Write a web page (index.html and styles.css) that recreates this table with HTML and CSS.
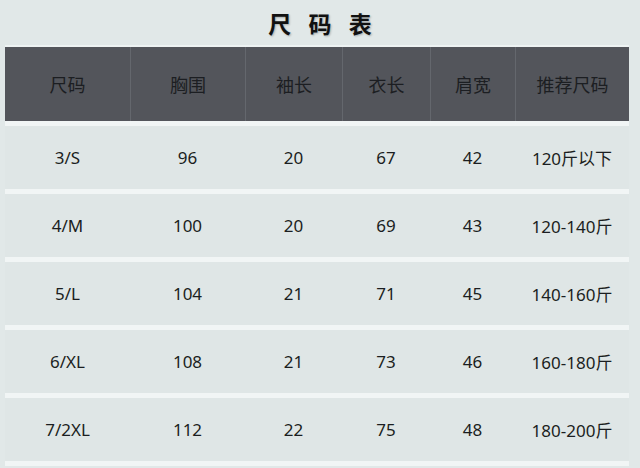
FILE: index.html
```html
<!DOCTYPE html>
<html lang="zh">
<head>
<meta charset="utf-8">
<link rel="stylesheet" href="styles.css">
</head>
<body>
<div class="page">
  <h1 class="title">尺 码 表</h1>
  <div class="table">
    <div class="row head">
      <div class="cell">尺码</div><div class="cell">胸围</div><div class="cell">袖长</div><div class="cell">衣长</div><div class="cell">肩宽</div><div class="cell">推荐尺码</div>
    </div>
    <div class="row">
      <div class="cell">3/S</div><div class="cell">96</div><div class="cell">20</div><div class="cell">67</div><div class="cell">42</div><div class="cell">120斤以下</div>
    </div>
    <div class="row">
      <div class="cell">4/M</div><div class="cell">100</div><div class="cell">20</div><div class="cell">69</div><div class="cell">43</div><div class="cell">120-140斤</div>
    </div>
    <div class="row">
      <div class="cell">5/L</div><div class="cell">104</div><div class="cell">21</div><div class="cell">71</div><div class="cell">45</div><div class="cell">140-160斤</div>
    </div>
    <div class="row">
      <div class="cell">6/XL</div><div class="cell">108</div><div class="cell">21</div><div class="cell">73</div><div class="cell">46</div><div class="cell">160-180斤</div>
    </div>
    <div class="row">
      <div class="cell">7/2XL</div><div class="cell">112</div><div class="cell">22</div><div class="cell">75</div><div class="cell">48</div><div class="cell">180-200斤</div>
    </div>
  </div>
</div>
</body>
</html>
```

FILE: styles.css
```css
html, body {
  margin: 0;
  padding: 0;
  background: #e1e8e8;
}
.page {
  width: 640px;
  height: 468px;
  overflow: hidden;
  font-family: "Noto Sans", "Noto Sans CJK SC", sans-serif;
  color: #1b1e21;
}
.title {
  margin: 0;
  height: 45px;
  line-height: 46px;
  font-size: 23px;
  font-weight: 700;
  text-align: center;
  letter-spacing: 6px;
  padding-left: 6px;
  color: #111111;
  text-shadow: 1px 1px 2px rgba(0, 0, 0, 0.25);
  font-family: "Noto Sans CJK SC", sans-serif;
}
.table {
  margin-left: 5px;
  width: 624px;
  border-top: 2px solid #eef3f3;
}
.row {
  display: grid;
  grid-template-columns: 125px 115px 97px 88px 85px 114px;
  height: 63px;
  border-bottom: 5px solid #f1f5f5;
  background: #dfe6e6;
}
.row.head {
  height: 74px;
  background: #53555b;
  color: #1c1e22;
}
.cell {
  display: flex;
  align-items: center;
  justify-content: center;
  font-size: 17px;
}
.head .cell {
  border-left: 1px solid #64676d;
  font-family: "Noto Sans CJK SC", sans-serif;
  font-size: 18px;
}
.head .cell:first-child {
  border-left: none;
}
```
